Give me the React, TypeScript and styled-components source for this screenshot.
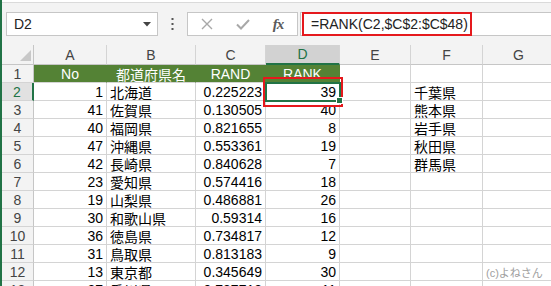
import React from 'react';
import styled, { createGlobalStyle } from 'styled-components';

const GlobalStyle = createGlobalStyle`
  html, body {
    margin: 0;
    padding: 0;
    background: #ffffff;
    overflow: hidden;
  }
`;

const GREEN = '#217346';
const GRID = '#d4d4d4';
const LATIN = '"Liberation Sans", Arial, sans-serif';
const CJK = '"Liberation Sans", "Noto Sans CJK JP", sans-serif';

const COLS = [32, 73, 89, 70, 74, 71, 72, 72];

const Window = styled.div`
  position: relative;
  width: 551px;
  height: 286px;
  overflow: hidden;
  box-sizing: border-box;
  border-left: 2px solid ${GREEN};
  background: #ffffff;
`;

const FormulaBar = styled.div`
  display: flex;
  align-items: flex-start;
  height: 43px;
  box-sizing: border-box;
  padding: 9px 0 0 4px;
  background: #f3f3f3;
  border-top: 1px solid #dadada;
  margin-top: 2px;
`;

const NameBox = styled.div`
  display: flex;
  align-items: center;
  justify-content: space-between;
  width: 152px;
  height: 24px;
  box-sizing: border-box;
  padding: 0 6px 0 7px;
  background: #ffffff;
  border: 1px solid #c6c6c6;
  font: 14px ${LATIN};
  color: #222;
`;

const DotsSlot = styled.div`
  display: flex;
  justify-content: center;
  align-items: center;
  width: 29px;
  height: 24px;
`;

const FxButtons = styled.div`
  display: flex;
  align-items: center;
  width: 111px;
  height: 24px;
  box-sizing: border-box;
  padding-left: 1px;
  background: #ffffff;
  border: 1px solid #c6c6c6;
`;

const FxSlot = styled.div<{ $w: number }>`
  display: flex;
  align-items: center;
  justify-content: center;
  width: ${p => p.$w}px;
  height: 100%;
`;

const FxLabel = styled.span`
  font: italic bold 15px "Liberation Serif", "Times New Roman", serif;
  color: #5a5a5a;
  letter-spacing: -1px;
`;

const FormulaInput = styled.div`
  display: flex;
  flex: 1;
  height: 24px;
  margin-left: 2px;
  box-sizing: border-box;
  background: #ffffff;
  border: 1px solid #c6c6c6;
  border-right: none;
`;

const FormulaText = styled.div`
  display: flex;
  align-items: center;
  width: 170px;
  margin: -1px 0 -1px 1px;
  box-sizing: border-box;
  padding-left: 7px;
  border: 2px solid #e5191d;
  font: 14px ${LATIN};
  color: #222;
  white-space: nowrap;
`;

const Sheet = styled.div`
  position: relative;
  display: grid;
  grid-template-columns: ${COLS.map(c => `${c}px`).join(' ')};
  grid-template-rows: 20px;
  grid-auto-rows: 18px;
`;

const Corner = styled.div`
  display: flex;
  align-items: flex-end;
  justify-content: flex-end;
  padding: 0 2px 3px 0;
  box-sizing: border-box;
  background: #f3f3f3;
  border-right: 1px solid #c6c6c6;
  border-bottom: 1px solid #c6c6c6;
`;

const ColHead = styled.div<{ $active?: boolean }>`
  display: flex;
  align-items: center;
  justify-content: center;
  box-sizing: border-box;
  background: ${p => (p.$active ? '#d2d2d2' : '#f3f3f3')};
  color: ${p => (p.$active ? GREEN : '#444')};
  border-right: 1px solid ${GRID};
  border-bottom: ${p => (p.$active ? `2px solid ${GREEN}` : '1px solid #c6c6c6')};
  font: 14px ${LATIN};
`;

const RowHead = styled.div<{ $active?: boolean }>`
  display: flex;
  align-items: center;
  justify-content: center;
  box-sizing: border-box;
  background: ${p => (p.$active ? '#e1e1e1' : '#f3f3f3')};
  color: ${p => (p.$active ? GREEN : '#444')};
  border-right: ${p => (p.$active ? `2px solid ${GREEN}` : '1px solid #c6c6c6')};
  border-bottom: 1px solid ${GRID};
  font: 14px ${LATIN};
`;

const Cell = styled.div<{ $align?: 'left' | 'right' | 'center'; $head?: boolean; $note?: boolean }>`
  display: flex;
  align-items: center;
  justify-content: ${p =>
    p.$align === 'right' ? 'flex-end' : p.$align === 'center' ? 'center' : 'flex-start'};
  box-sizing: border-box;
  padding: 0 ${p => (p.$align === 'right' ? 3 : 2)}px 0 ${p => (p.$align === 'left' ? 3 : 2)}px;
  background: ${p => (p.$head ? '#548235' : 'transparent')};
  color: ${p => (p.$head ? '#ffffff' : p.$note ? '#a0a0a0' : '#000')};
  border-right: 1px solid ${p => (p.$head ? '#548235' : GRID)};
  border-bottom: 1px solid ${GRID};
  font: ${p => (p.$note ? '11px' : '14px')} ${CJK};
  white-space: nowrap;
  overflow: hidden;
`;

const Selection = styled.div`
  position: absolute;
  left: 263px;
  top: 37px;
  width: 76px;
  height: 20px;
  box-sizing: border-box;
  border: 2px solid ${GREEN};
  pointer-events: none;
`;

const FillHandle = styled.div`
  position: absolute;
  right: -4px;
  bottom: -4px;
  width: 5px;
  height: 5px;
  background: ${GREEN};
  border: 1px solid #ffffff;
`;

const Highlight = styled.div`
  position: absolute;
  left: 261px;
  top: 32px;
  width: 80px;
  height: 30px;
  box-sizing: border-box;
  border: 2px solid #e5191d;
  pointer-events: none;
`;

type Row = [string, string, string, string, string, string];

const rows: Row[] = [
  ['1', '北海道', '0.225223', '39', '千葉県', ''],
  ['41', '佐賀県', '0.130505', '40', '熊本県', ''],
  ['40', '福岡県', '0.821655', '8', '岩手県', ''],
  ['47', '沖縄県', '0.553361', '19', '秋田県', ''],
  ['42', '長崎県', '0.840628', '7', '群馬県', ''],
  ['23', '愛知県', '0.574416', '18', '', ''],
  ['19', '山梨県', '0.486881', '26', '', ''],
  ['30', '和歌山県', '0.59314', '16', '', ''],
  ['36', '徳島県', '0.734817', '12', '', ''],
  ['31', '鳥取県', '0.813183', '9', '', ''],
  ['13', '東京都', '0.345649', '30', '', '(c)よねさん'],
  ['37', '香川県', '0.737713', '11', '', ''],
];

const letters = ['A', 'B', 'C', 'D', 'E', 'F', 'G'];
const headers = ['No', '都道府県名', 'RAND', 'RANK'];

const App: React.FC = () => {
  return (
    <>
      <GlobalStyle />
      <Window>
        <FormulaBar>
          <NameBox>
            <span>D2</span>
            <svg width="8" height="5" viewBox="0 0 8 5">
              <polygon points="0,0 8,0 4,4.5" fill="#444" />
            </svg>
          </NameBox>
          <DotsSlot>
            <svg width="3" height="13" viewBox="0 0 3 13">
              <rect x="0.5" y="0" width="2" height="2" fill="#555" />
              <rect x="0.5" y="5" width="2" height="2" fill="#555" />
              <rect x="0.5" y="10" width="2" height="2" fill="#555" />
            </svg>
          </DotsSlot>
          <FxButtons>
            <FxSlot $w={36}>
              <svg width="12" height="12" viewBox="0 0 12 12">
                <path d="M1 1 L11 11 M11 1 L1 11" stroke="#a8a8a8" strokeWidth="1.4" />
              </svg>
            </FxSlot>
            <FxSlot $w={36}>
              <svg width="14" height="11" viewBox="0 0 14 11">
                <path d="M1 5.5 L5 9.5 L13 1" stroke="#a8a8a8" strokeWidth="2" fill="none" />
              </svg>
            </FxSlot>
            <FxSlot $w={34}>
              <FxLabel>fx</FxLabel>
            </FxSlot>
          </FxButtons>
          <FormulaInput>
            <FormulaText>=RANK(C2,$C$2:$C$48)</FormulaText>
          </FormulaInput>
        </FormulaBar>

        <Sheet>
          <Corner>
            <svg width="11" height="11" viewBox="0 0 11 11">
              <polygon points="11,0 11,11 0,11" fill="#c8c8c8" />
            </svg>
          </Corner>
          {letters.map(l => (
            <ColHead key={l} $active={l === 'D'}>
              {l}
            </ColHead>
          ))}

          <RowHead>1</RowHead>
          {headers.map(h => (
            <Cell key={h} $head $align="center">
              {h}
            </Cell>
          ))}
          <Cell />
          <Cell />
          <Cell />

          {rows.map((r, i) => (
            <React.Fragment key={i}>
              <RowHead $active={i === 0}>{i + 2}</RowHead>
              <Cell $align="right">{r[0]}</Cell>
              <Cell $align="left">{r[1]}</Cell>
              <Cell $align="right">{r[2]}</Cell>
              <Cell $align="right">{r[3]}</Cell>
              <Cell />
              <Cell $align="left">{r[4]}</Cell>
              <Cell $align="left" $note={!!r[5]}>
                {r[5]}
              </Cell>
            </React.Fragment>
          ))}

          <Highlight />
          <Selection>
            <FillHandle />
          </Selection>
        </Sheet>
      </Window>
    </>
  );
};

export default App;
